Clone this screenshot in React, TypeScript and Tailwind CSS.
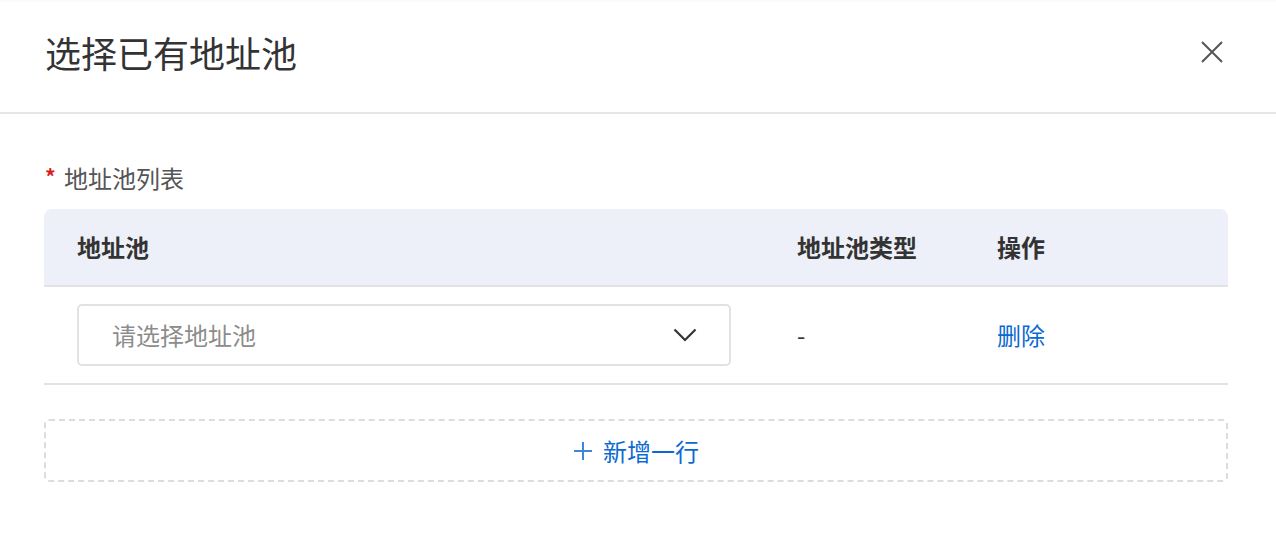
const font = "font-['Noto_Sans_CJK_SC','Noto_Sans',sans-serif]";

function CloseIcon() {
  return (
    <svg width="24" height="24" viewBox="0 0 24 24" fill="none">
      <path d="M2 2L22 22M22 2L2 22" stroke="#555" strokeWidth="2" />
    </svg>
  );
}

function Chevron() {
  return (
    <svg width="24" height="14" viewBox="0 0 24 14" fill="none">
      <path d="M1.5 1.5L12 12L22.5 1.5" stroke="#333" strokeWidth="2.2" />
    </svg>
  );
}

export default function App() {
  return (
    <div className={`w-[1276px] h-[534px] bg-white ${font}`}>
      <header className="flex items-center justify-between h-[114px] pl-[45px] pr-[52px] pb-[8px] border-b-2 border-[#e6e6e6] shadow-[inset_0_2px_2px_-1px_rgba(0,0,0,0.03)]">
        <h1 className="text-[36px] leading-none text-[#333] font-normal">
          选择已有地址池
        </h1>
        <button className="w-[24px] h-[24px] flex items-center justify-center">
          <CloseIcon />
        </button>
      </header>

      <section className="px-[44px] pt-[49px]">
        <div className="flex items-center h-[30px] mb-[16px] text-[24px] text-[#555]">
          <span className="text-[#d91c1c] text-[21px] font-bold w-[20px] pl-[1px] leading-none -mt-[4px]">*</span>
          <span>地址池列表</span>
        </div>

        <div className="w-[1184px]">
          <div className="flex items-center h-[78px] bg-[#edf0f8] rounded-t-[8px] border-b-2 border-[#e3e3e6] text-[24px] font-bold text-[#333]">
            <div className="w-[720px] pl-[33px]">地址池</div>
            <div className="w-[200px] pl-[33px]">地址池类型</div>
            <div className="flex-1 pl-[33px]">操作</div>
          </div>
          <div className="flex items-center h-[98px] border-b-2 border-[#e3e3e3] text-[24px]">
            <div className="w-[720px] pl-[33px]">
              <div className="flex items-center justify-between w-[654px] h-[62px] border-2 border-[#e2e2e2] rounded-[5px] pl-[33px] pr-[32px]">
                <span className="text-[#8c8c8c]">请选择地址池</span>
                <Chevron />
              </div>
            </div>
            <div className="w-[200px] pl-[33px] text-[#333]">-</div>
            <div className="flex-1 pl-[33px] text-[#0b6ad0]">删除</div>
          </div>
        </div>

        <button className="mt-[34px] w-[1184px] h-[63px] flex items-center justify-center gap-[10px] border-2 border-dashed border-[#dcdcdc] rounded-[5px] text-[24px] text-[#0b6ad0]">
          <svg width="20" height="20" viewBox="0 0 20 20" fill="none">
            <path d="M10 1V19M1 10H19" stroke="#3d86d9" strokeWidth="2" />
          </svg>
          <span>新增一行</span>
        </button>
      </section>
    </div>
  );
}
